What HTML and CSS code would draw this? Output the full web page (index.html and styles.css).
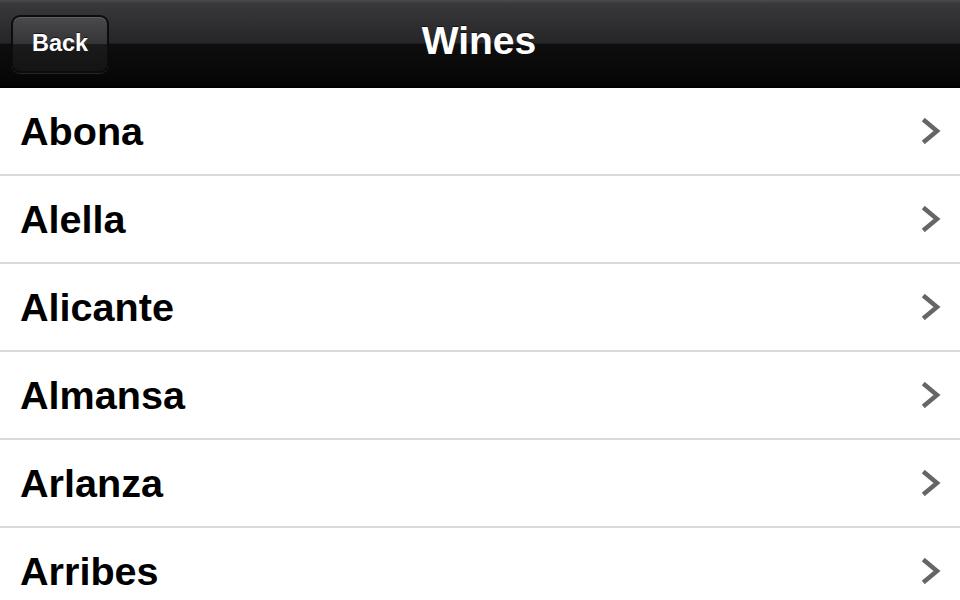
FILE: index.html
```html
<!DOCTYPE html>
<html>
<head>
<meta charset="utf-8">
<link rel="stylesheet" href="styles.css">
</head>
<body>
<div class="navbar">
  <div class="back">Back</div>
  <div class="title">Wines</div>
</div>
<ul class="list">
  <li class="row"><span class="label">Abona</span><svg class="chev" viewBox="0 0 20 26"><path d="M3 3 L15 13 L3 23" /></svg></li>
  <li class="row"><span class="label">Alella</span><svg class="chev" viewBox="0 0 20 26"><path d="M3 3 L15 13 L3 23" /></svg></li>
  <li class="row"><span class="label">Alicante</span><svg class="chev" viewBox="0 0 20 26"><path d="M3 3 L15 13 L3 23" /></svg></li>
  <li class="row"><span class="label">Almansa</span><svg class="chev" viewBox="0 0 20 26"><path d="M3 3 L15 13 L3 23" /></svg></li>
  <li class="row"><span class="label">Arlanza</span><svg class="chev" viewBox="0 0 20 26"><path d="M3 3 L15 13 L3 23" /></svg></li>
  <li class="row"><span class="label">Arribes</span><svg class="chev" viewBox="0 0 20 26"><path d="M3 3 L15 13 L3 23" /></svg></li>
</ul>
</body>
</html>
```
FILE: styles.css
```css
html, body {
  margin: 0;
  padding: 0;
  background: #ffffff;
  overflow: hidden;
  height: 600px;
}
body {
  font-family: "Liberation Sans", Arial, sans-serif;
}
.navbar {
  position: relative;
  height: 86px;
  border-bottom: 2px solid #000;
  background: linear-gradient(to bottom, #4a4a4c 0px, #38383a 4px, #262628 43px, #0e0e0f 44px, #050505 86px);
  display: flex;
  align-items: center;
  justify-content: center;
}
.back {
  position: absolute;
  left: 11px;
  top: 15px;
  width: 98px;
  height: 58px;
  box-sizing: border-box;
  border: 2px solid #0c0c0c;
  border-radius: 9px;
  box-shadow: inset 0 1px 0 rgba(255,255,255,0.12), 0 1px 0 rgba(255,255,255,0.12);
  background: linear-gradient(to bottom, #4a4a4c 0%, #343436 50%, #1a1a1b 51%, #141414 100%);
  color: #fff;
  font-weight: bold;
  font-size: 23.5px;
  display: flex;
  align-items: center;
  justify-content: center;
  padding: 0 0 1px 0;
  text-shadow: 0 -1px 0 rgba(0,0,0,0.6);
}
.title {
  color: #fff;
  font-weight: bold;
  font-size: 39px;
  margin-top: -4px;
  margin-left: -2px;
  text-shadow: 0 -1px 0 rgba(0,0,0,0.6);
}
.list {
  list-style: none;
  margin: 0;
  padding: 0;
}
.row {
  height: 86px;
  border-bottom: 2px solid #d9d9d9;
  display: flex;
  align-items: center;
  justify-content: space-between;
  padding: 0 18px 0 20px;
}
.label {
  font-weight: bold;
  font-size: 39.6px;
  color: #000;
}
.chev {
  width: 20px;
  height: 26px;
}
.chev path {
  fill: none;
  stroke: #666666;
  stroke-width: 4.5;
  stroke-linecap: square;
  stroke-linejoin: miter;
}
```
